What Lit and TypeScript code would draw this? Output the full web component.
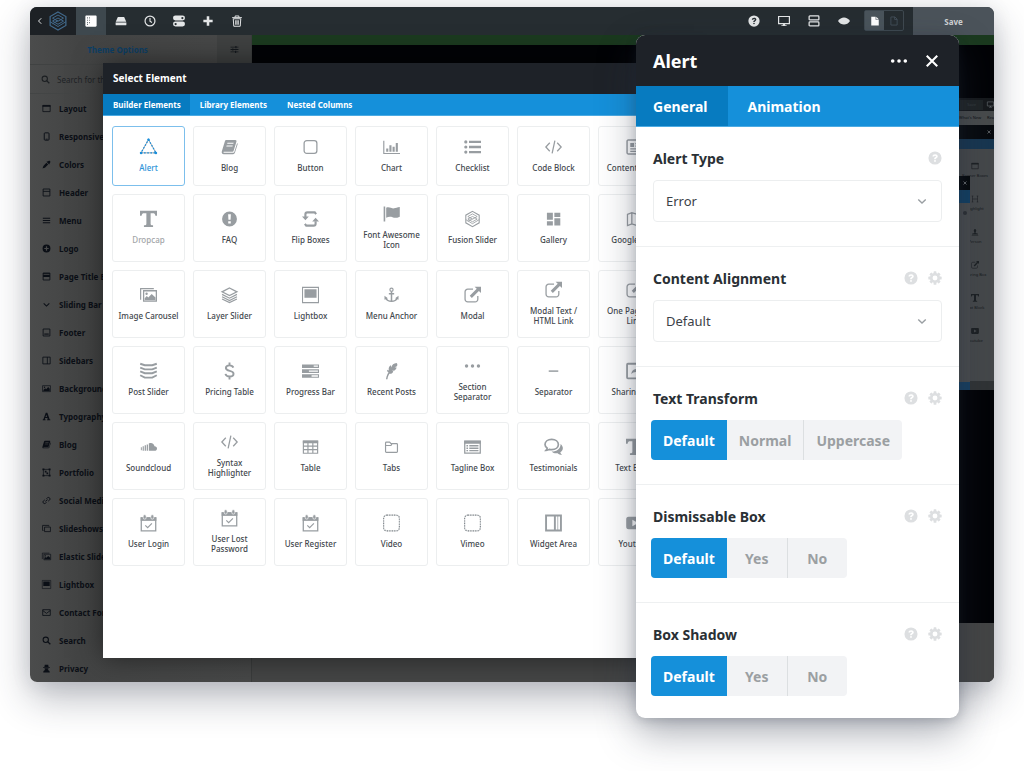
import { LitElement, html, css, svg, nothing } from "lit";
import { customElement, property, state } from "lit/decorators.js";
import { classMap } from "lit/directives/class-map.js";

const cube = svg`
  <path d="M8 .8 14.3 4.4v7.2L8 15.2 1.7 11.6V4.4z" fill="none" stroke="currentColor" stroke-width="1"/>
  <path d="M8 3.2 12.4 5.7 8 8.2 3.6 5.7zM3.6 8 8 5.6l4.4 2.5L8 10.6zM1.7 8.6 8 12.4l6.3-3.8M3.6 10.2 8 7.7" fill="none" stroke="currentColor" stroke-width=".8"/>`;

const external = svg`
  <path d="M8.500 2.500H3.500A2.500 2.500 0 0 0 1 5v7a2.500 2.500 0 0 0 2.500 2.500h7A2.500 2.500 0 0 0 13 12V9" fill="none" stroke="currentColor" stroke-width="1.200"/>
  <path d="M10 .2h6v6l-2-2-6.600 6.600-2-2L12 2.200z"/>`;

const code = svg`<path d="M4.500 4 .8 8l3.700 4M11.500 4l3.700 4-3.700 4M9.300 2 6.700 14" fill="none" stroke="currentColor" stroke-width="1.200"/>`;

const calendar = svg`
  <path d="M1.200 3.200h13.600v12.200H1.200z" fill="none" stroke="currentColor" stroke-width="1.200"/>
  <path d="M.6 2.600h14.800v3.400H.6z"/>
  <rect x="3" y=".3" width="2.800" height="4" rx="1.200" fill="currentColor" stroke="#fff" stroke-width=".6"/>
  <rect x="10.200" y=".3" width="2.800" height="4" rx="1.200" fill="currentColor" stroke="#fff" stroke-width=".6"/>
  <path d="m5 10.200 2.200 2.200 4-4" fill="none" stroke="currentColor" stroke-width="1.100"/>`;

const serifT = svg`<path d="M0 .2h16v4.800h-1.500c-.3-1.800-1-2.300-2.400-2.300H10v10c0 .9.5 1.100 2.300 1.200v1.700H3.700v-1.700c1.800-.1 2.300-.3 2.300-1.200v-10H3.900c-1.400 0-2.100.5-2.400 2.300H0z"/>`;

const dotted = svg`
  <rect x=".6" y=".6" width="14.800" height="14.800" rx="3" fill="none" stroke="#d3d6d8" stroke-width="1"/>
  <rect x=".6" y=".6" width="14.800" height="14.800" rx="3" fill="none" stroke="#7f858a" stroke-width="1" stroke-dasharray="1 1.300"/>`;

const question = svg`
  <path fill-rule="evenodd" d="M8 .5a7.500 7.500 0 1 1 0 15 7.500 7.500 0 0 1 0-15zM5.100 6.300h1.900c.1-.7.500-1 1.100-1 .6 0 1 .3 1 .8 0 .5-.3.700-.9 1.100-.8.500-1.200 1-1.200 2v.2h1.800c0-.6.300-.8.900-1.200.8-.5 1.400-1.100 1.400-2.200 0-1.500-1.200-2.400-2.900-2.400-1.900 0-3 1-3.100 2.700zM8 10.200a1.100 1.100 0 1 0 0 2.200 1.100 1.100 0 0 0 0-2.200z"/>`;

const ICONS: Record<string, unknown> = {
  alert: svg`<path d="M8 1 15 13.500H1z" fill="none" stroke="#9a9ea3" stroke-width=".9"/><path d="M8 1 15 13.500H1z" fill="none" stroke="#1b8fdb" stroke-width="1.200" stroke-dasharray="1.500 1.500"/><circle cx="8" cy="1.200" r="1.200"/><circle cx="1" cy="13.600" r="1.200"/><circle cx="15" cy="13.600" r="1.200"/>`,
  book: svg`<path fill-rule="evenodd" d="M5.200 1.500h8.300c.9 0 1.300.7 1 1.500l-2.600 8.500c-.2.700-.7 1-1.400 1H3c-.6 0-.9.600-.4 1h8.600c.7 0 1.200-.4 1.400-1l2.600-8.300c.5.500.6 1 .4 1.500l-2.500 7.800c-.3.900-.9 1.300-1.700 1.300H2.600C1 14.800.3 13.300.8 12L3.600 2.800c.3-.9.800-1.300 1.600-1.300zM6.100 3.900l-.3 1.100h5.800l.3-1.100zm-.8 2.600L5 7.600h5.800l.3-1.100z"/>`,
  button: svg`<rect x="2" y="2" width="12" height="12" rx="2.500" fill="none" stroke="currentColor" stroke-width="1.200"/>`,
  chart: svg`<path d="M.2 2h1.100v11.600H16v1.100H.2zM3 9.500h2v3H3zM6 6.300h2v6.200H6zM9 7.800h2v4.700H9zM12 4.200h2v8.300h-2z"/>`,
  checklist: svg`<circle cx="1.700" cy="3.200" r="1.500"/><circle cx="1.700" cy="8" r="1.500"/><circle cx="1.700" cy="12.800" r="1.500"/><path d="M4.700 2.100H16v2.200H4.700zM4.700 6.900H16v2.200H4.700zM4.700 11.700H16v2.200H4.700z"/>`,
  code,
  content: svg`<rect x="1" y="1.500" width="14" height="13" rx="1" fill="none" stroke="currentColor" stroke-width="1.400"/><path d="M4 4.200h3.600V8H4zM8.800 4.200h3.400v1.200H8.800zM8.800 6.600h3.400v1.200H8.800zM4 9.200h8.200v1.200H4zM4 11.500h8.200v1.200H4z"/>`,
  dropcap: serifT,
  faq: svg`<path fill-rule="evenodd" d="M8 1a7 7 0 1 1 0 14A7 7 0 0 1 8 1zM6.700 3.600l.3 5.100h2l.3-5.100zM6.800 10.100v2.200h2.400v-2.200z"/>`,
  flip: svg`<path d="M3.200 6V3.600C3.200 2.400 3.800 1.800 5 1.800h7l1.300 1.700M12.800 10v2.400c0 1.200-.6 1.800-1.800 1.800H4l-1.300-1.700" fill="none" stroke="currentColor" stroke-width="2"/><path d="M0 5.600h6.400L3.200 9.200zM9.600 10.400H16l-3.200-3.600z"/>`,
  flag: svg`<path d="M.6 1h1.500v14H.6zM3 2c3-1.200 5 1 7.400.7 1.600-.2 3-.8 5.400-1.200v9c-3.200 1.600-5.200 1.200-6.800.6-2-.7-4-.6-6 .5z"/>`,
  cube,
  gallery: svg`<path d="M1.800 2h5.600v6.800H1.800zM8.800 2h5.600v4H8.800zM8.800 7.400h5.600V14H8.800zM1.800 10.200h5.600V14H1.800z"/>`,
  map: svg`<path d="M1.400 3.600 5.500 2l5 1.600L14.600 2v10.600l-4.100 1.600-5-1.600-4.100 1.600zM5.500 2v10.600M10.500 3.600v10.600" fill="none" stroke="currentColor" stroke-width="1.200"/>`,
  carousel: svg`<path d="M3.400 4h12v9.800h-12z" fill="none" stroke="currentColor" stroke-width="1.200"/><path d="M.6 12.500V2H13" fill="none" stroke="currentColor" stroke-width="1.100"/><path d="M4.400 13v-2l2-2 1.400 1.300L11 7l3.600 3.400V13z"/><circle cx="6.200" cy="6.800" r="1.100"/>`,
  layers: svg`<path d="M8 1.400 15 5 8 8.600 1 5z" fill="none" stroke="currentColor" stroke-width="1.200"/><path d="M1 7.400 8 11l7-3.600M1 9.600l7 3.600 7-3.600M1 11.800l7 3.400 7-3.400" fill="none" stroke="currentColor" stroke-width="1.100"/>`,
  lightbox: svg`<path d="M.5.800h15v14.400H.5z" fill="none" stroke="currentColor" stroke-width="1"/><path d="M2.300 2.600h11.400v8H2.300z"/>`,
  anchor: svg`<path d="M8 4.500v9M5.500 6.800h5M2.600 10.800c1 2.400 2.900 3.100 5.400 3.100s4.400-.7 5.400-3.100" fill="none" stroke="currentColor" stroke-width="1.400"/><circle cx="8" cy="3" r="1.500" fill="none" stroke="currentColor" stroke-width="1.100"/><path d="M1.400 8.800 4.600 11l-3.200 1.500zM14.600 8.800 11.400 11l3.200 1.500z"/>`,
  external,
  sharing: svg`<rect x="1" y="1.200" width="14" height="13.800" rx=".8" fill="none" stroke="currentColor" stroke-width="1.700"/><path d="M5 11c.2-3 1.800-4.600 4.400-4.800V4.400l4 3.200-4 3.200V8.900C7.500 9 6 9.600 5 11z"/>`,
  post: svg`<path d="M.2 1.200 4.500 2.600h7L15.800 1.200M.2 4.800l4.300 1.700h7l4.300-1.700M.2 8.400l4.300 1.700h7l4.300-1.700M.2 12l4.300 2.200h7L15.800 12" fill="none" stroke="currentColor" stroke-width="1.800"/>`,
  dollar: svg`<path d="M11.600 4.800C11.100 3.400 9.900 2.700 8 2.700c-2.100 0-3.400.9-3.400 2.400 0 3.700 7.200 1.800 7.200 5.400 0 1.600-1.500 2.700-3.700 2.700-2.100 0-3.500-.9-3.900-2.500M8 0v2.600M8 13.300V16" fill="none" stroke="currentColor" stroke-width="1.800"/>`,
  progress: svg`<path fill-rule="evenodd" d="M0 1.800h16v3.400H0zM11 2.900v1.200h4V2.900zM0 6.400h16v3.400H0zM6.500 7.500v1.200H15V7.500zM0 11h16v3.400H0zM9 12.100v1.200h6v-1.200z"/>`,
  feather: svg`<path d="M2.800 15.700c.6-3.500 1.400-5 2.400-6.500-.9-.2-1.500-.9-1.200-2.300l1.500.7C4.900 5.200 5.800 3.500 7.500 2.700l.3 1.900C8.400 2.100 10 .6 12.800.4c.9.700.9 2 .3 3.200l-2.200.9 1.900.2c-.4 1.600-1.300 2.500-2.500 3l-1.700-.1 1.100.9c-.7 1.700-2 2.400-3.700 2.100-.9 1.400-1.500 2.900-1.800 5.100z"/>`,
  dots: svg`<circle cx="2.400" cy="8" r="1.600"/><circle cx="8" cy="8" r="1.600"/><circle cx="13.600" cy="8" r="1.600"/>`,
  dash: svg`<path d="M3.500 7.400h9v1.400h-9z"/>`,
  soundcloud: svg`<path d="M8.300 4.700c2.600-1.300 5 .2 5.300 2.600 1.300-.1 2.400.8 2.400 2.100s-1 2.200-2.200 2.200H8.300zM6.300 5.700h1.200v5.900H6.300zM4.400 6.400h1.200v5.200H4.400zM2.500 7.400h1.100v4.200H2.500zM.8 8.300h.9v2.800H.8z"/>`,
  table: svg`<path d="M1.300 2.500h13.400v11.400H1.300zM1.300 7.200h13.400M1.300 10.400h13.400M5.600 4v9.900M10.200 4v9.900" fill="none" stroke="currentColor" stroke-width="1.100"/><path d="M.8 2h14.400v2.500H.8z"/>`,
  folder: svg`<path d="M2.400 12.300V4.200c0-.5.300-.8.800-.8h3l1.400 1.500h5.200c.5 0 .8.300.8.800v6.600c0 .5-.3.800-.8.800H3.200c-.5 0-.8-.3-.8-.8zM2.500 6.600h5l1-1.700" fill="none" stroke="currentColor" stroke-width="1.100"/>`,
  tagline: svg`<path d="M.7 2.500h14.600v11.300H.7z" fill="none" stroke="currentColor" stroke-width="1.200"/><path d="M.2 2h15.600v3H.2zM2.300 6.200h1.500v1.300H2.300zM5 6.200h8.600v1.300H5zM2.300 8.500h1.500v1.300H2.300zM5 8.500h8.600v1.300H5zM2.300 10.800h1.500v1.300H2.300zM5 10.800h8.600v1.300H5z"/>`,
  chat: svg`<path d="M6.300.9c3.700 0 6.300 2.100 6.300 4.800s-2.600 4.800-6.300 4.800c-.8 0-1.500-.1-2.200-.3-.9.600-1.900.9-3.100.9.600-.6 1-1.300 1.100-2C.800 8.200 0 7.100 0 5.700 0 3 2.600.9 6.300.9z" fill="none" stroke="currentColor" stroke-width="1.600"/><path d="M14.700 5.200c2.900 2.600 2.900 5.700-.3 7.800.2 1 .8 1.700 1.700 2.400-1.800 0-3.200-.6-4.200-1.500-2.300.3-4.300-.1-5.700-1.600 4.900.1 8.400-2.500 8.500-7.100z"/>`,
  text: serifT,
  calendar,
  dotted,
  widget: svg`<path d="M1 1h14v14H1zM9.300 1v14" fill="none" stroke="currentColor" stroke-width="1.800"/><path d="M12 1v14" fill="none" stroke="currentColor" stroke-width=".7"/>`,
  youtube: svg`<path fill-rule="evenodd" d="M2.500 2.200h11c1.700 0 2.300 1 2.300 2.600v6.400c0 1.600-.6 2.600-2.300 2.600h-11C.8 13.800.2 12.800.2 11.200V4.800c0-1.600.6-2.600 2.300-2.600zM6 5v6l5.400-3z"/>`,

  layout: svg`<path d="M1.500 2.500h13v11h-13z" fill="none" stroke="currentColor" stroke-width="1.400"/><path d="M1 2h14v3H1z"/>`,
  phone: svg`<rect x="4" y="1.500" width="8.500" height="13" rx="1.500" fill="none" stroke="currentColor" stroke-width="1.700"/><path d="M6.500 11.800h3.500v1.400H6.500z"/>`,
  dropper: svg`<path d="M10.200 2.600c1.200-1.400 2.700-2 4-.9 1.300 1.200.6 2.900-.8 4.100l.6.600-1.400 1.400-4.500-4.500L9.500 2zM7.900 5l3.100 3.100-5.800 5.500-2.600.7-1 .8-.7-.7.800-1 .7-2.600z"/>`,
  header: svg`<path d="M2 1.800h12v12.400H2zM2 6h12" fill="none" stroke="currentColor" stroke-width="1.500"/>`,
  menu: svg`<path d="M1.500 3h13v1.800h-13zM1.500 7.100h13v1.800h-13zM1.500 11.200h13V13h-13z"/>`,
  plusCircle: svg`<path fill-rule="evenodd" d="M8 1a7 7 0 1 1 0 14A7 7 0 0 1 8 1zM6.900 4v2.900H4v2.200h2.900V12h2.200V9.100H12V6.900H9.100V4z"/>`,
  titlebar: svg`<path d="M2 1.800h12v12.400H2z" fill="none" stroke="currentColor" stroke-width="1.500"/><path d="M2 2h12v2H2zM2 5.500h12v3.500H2z"/>`,
  down: svg`<path d="m3 6 5 4.800L13 6" fill="none" stroke="currentColor" stroke-width="1.900"/>`,
  footer: svg`<path d="M2 1.800h12v12.400H2z" fill="none" stroke="currentColor" stroke-width="1.500"/><path d="M4 9.800h8v2H4z"/>`,
  sidebars: svg`<path d="M1.500 2h13v12h-13zM9.500 2v12" fill="none" stroke="currentColor" stroke-width="1.500"/>`,
  image: svg`<path d="M1 3h14v10.500H1z" fill="none" stroke="currentColor" stroke-width="1.200"/><path d="M2.500 12.500v-2l3-3 2 2L11 5.500l2.800 3v4z"/><circle cx="4.500" cy="5.800" r="1.200"/>`,
  typeA: svg`<path fill-rule="evenodd" d="M6.700 1.500h2.800l4 11.600 1.300.2v1.400H9v-1.400l1.300-.2-.7-2.300H5.700L5 13.100l1.400.2v1.400H1.300v-1.400l1.200-.2zM7.600 4.800 6.300 8.900h2.700z"/>`,
  portfolio: svg`<path d="M2.500 2.500h11v11h-11z" fill="none" stroke="currentColor" stroke-width="1.200"/><path d="M.8.800h3.400v3.400H.8zM11.800.8h3.400v3.400h-3.400zM.8 11.800h3.400v3.400H.8zM11.800 11.800h3.400v3.400h-3.400zM5 5h3v3H5zM8 8h3v3H8z"/>`,
  link: svg`<g transform="rotate(8 8 8)"><path d="M7.300 4.900 9.500 2.700a2.700 2.700 0 0 1 3.800 3.800L11.100 8.700M8.700 11.100l-2.200 2.200a2.700 2.700 0 0 1-3.800-3.800L4.900 7.300M6.200 9.800l3.600-3.600" fill="none" stroke="currentColor" stroke-width="1.500"/></g>`,
  slides: svg`<path d="M4.500 5.500h10.500v8H4.500zM2.700 11.500H1v-9h11v1.700" fill="none" stroke="currentColor" stroke-width="1.400"/>`,
  mail: svg`<path d="M1.300 3h13.400v10.200H1.300zM1.300 4.500 8 9.500l6.700-5" fill="none" stroke="currentColor" stroke-width="1.500"/>`,
  search: svg`<circle cx="6.700" cy="6.700" r="4.700" fill="none" stroke="currentColor" stroke-width="1.900"/><path d="m10 10 4.800 4.800" stroke="currentColor" stroke-width="2.300"/>`,
  privacy: svg`<path d="M5 1.500c1-.8 2 0 3 0s2-.8 3 0l.8 4H14v1.300H2V5.500h2.200zM4.500 7.500h7c0 1.600-.8 2.800-1.700 3.300 2.600.5 4 1.600 4 4.200H2.200c0-2.600 1.400-3.700 4-4.200-.9-.5-1.700-1.700-1.700-3.300z"/>`,

  back: svg`<path d="M10.500 2.500 5 8l5.500 5.500" fill="none" stroke="currentColor" stroke-width="2"/>`,
  panel: svg`<path fill-rule="evenodd" d="M2 .5h12c1 0 1.500.5 1.500 1.500v12c0 1-.5 1.500-1.500 1.500H2C1 15.500.5 15 .5 14V2C.5 1 1 .5 2 .5zM2.800 3v1.500h1V3zm0 3.200v1.500h1V6.200zm0 3.200v1.500h1V9.400zm0 2.600v1.400h1V12zM5.600 3v1.500h.9V3zm0 3.200v1.500h.9V6.200zm0 3.200v1.500h.9V9.400z"/>`,
  drive: svg`<path d="M3.800 2.500h8.400L15 9H1zM.8 10h14.400v2.500c0 .8-.4 1.200-1.200 1.200H2c-.8 0-1.200-.4-1.200-1.200z"/>`,
  clock: svg`<circle cx="8" cy="8" r="6.600" fill="none" stroke="currentColor" stroke-width="1.600"/><path d="M8 4v4.400l2.600 1.500" fill="none" stroke="currentColor" stroke-width="1.500"/>`,
  toggles: svg`<path fill-rule="evenodd" d="M3.200.8h9.600a3.200 3.200 0 0 1 0 6.400H3.200a3.200 3.200 0 0 1 0-6.400zM12.500 2.500a1.500 1.500 0 1 0 0 3 1.500 1.500 0 0 0 0-3zM3.200 8.800h9.600a3.200 3.200 0 0 1 0 6.400H3.200a3.200 3.200 0 0 1 0-6.400zM3.500 10.500a1.500 1.500 0 1 0 0 3 1.500 1.500 0 0 0 0-3z"/>`,
  plus: svg`<path d="M6.300 1.800h3.400v4.500h4.500v3.400H9.700v4.500H6.300V9.700H1.800V6.300h4.500z"/>`,
  trash: svg`<path d="M3 5h10l-.7 10H3.700zM1.500 3.500h13M5.500 3V1.300h5V3M6.300 7v6M8 7v6M9.700 7v6" fill="none" stroke="currentColor" stroke-width="1.300"/>`,
  question,
  monitor: svg`<path d="M.8 2h14.400v9.400H.8z" fill="none" stroke="currentColor" stroke-width="1.600"/><path d="M6.500 11.500h3v2h2v1.300h-7v-1.300h2z"/>`,
  rows: svg`<rect x="1.500" y="1.300" width="13" height="5.200" rx="1" fill="none" stroke="currentColor" stroke-width="1.700"/><rect x="1.500" y="9.300" width="13" height="5.200" rx="1" fill="none" stroke="currentColor" stroke-width="1.700"/>`,
  eye: svg`<path d="M0 8c3.800-6.400 12.200-6.400 16 0-3.800 6.400-12.200 6.400-16 0z"/>`,
  file: svg`<path d="M2 1h7v5h5v9H2zM10 1l4 4h-4z"/>`,
  fileLine: svg`<path d="M3 1.500h6.500L13 5v9.500H3zM9 1.500v4h4" fill="none" stroke="currentColor" stroke-width="1.300"/>`,
  sliders: svg`<path d="M1 3h14v1.400H1zM1 7.300h14v1.400H1zM1 11.600h14V13H1zM9.500 1.800h2v3.800h-2zM4 6.100h2v3.800H4zM9 10.400h2v3.800H9z"/>`,
  close: svg`<path d="m2 2 12 12M14 2 2 14" fill="none" stroke="currentColor" stroke-width="2.400"/>`,
  gear: svg`<g transform="translate(8 8)">${[0, 45, 90, 135].map((a) => svg`<rect x="-1.600" y="-7.600" width="3.200" height="15.200" rx=".6" transform="rotate(${a})" mask="url(#hole)"/>`)}</g>
    <defs><mask id="hole" maskUnits="userSpaceOnUse" x="-8" y="-8" width="16" height="16"><rect x="-8" y="-8" width="16" height="16" fill="#fff"/><circle r="4" fill="#000"/></mask></defs>
    <circle cx="8" cy="8" r="4.300" fill="none" stroke="currentColor" stroke-width="3"/>`,
  heading: svg`<path d="M3 2v12M13 2v12M3 8h10M1.500 2h3M11.500 2h3M1.500 14h3M11.500 14h3" fill="none" stroke="currentColor" stroke-width="1.200"/>`,
  person: svg`<path d="M5.500 5a2.500 3 0 1 1 5 0c0 1.500-.8 2.500-1.200 3.500v1.700L14 11.500V13H2v-1.500l4.700-1.300V8.500C6.300 7.500 5.500 6.500 5.500 5zM1.500 14h13v1h-13z"/>`,
};

const icon = (name: string) =>
  html`<svg class="icon" viewBox="0 0 16 16" fill="currentColor" aria-hidden="true">${ICONS[name] ?? nothing}</svg>`;

const base = css`
  * { box-sizing: border-box; }
  button, input, select { font: inherit; color: inherit; border: 0; margin: 0; padding: 0; background: none; }
  button { cursor: pointer; }
  .icon { display: block; flex: none; width: 12px; height: 12px; overflow: visible; }
`;

const OPTIONS: [string, string][] = [
  ["layout", "Layout"], ["phone", "Responsive"], ["dropper", "Colors"], ["header", "Header"],
  ["menu", "Menu"], ["plusCircle", "Logo"], ["titlebar", "Page Title Bar"], ["down", "Sliding Bar"],
  ["footer", "Footer"], ["sidebars", "Sidebars"], ["image", "Background"], ["typeA", "Typography"],
  ["book", "Blog"], ["portfolio", "Portfolio"], ["link", "Social Media"], ["slides", "Slideshows"],
  ["carousel", "Elastic Slider"], ["lightbox", "Lightbox"], ["mail", "Contact Form"],
  ["search", "Search"], ["privacy", "Privacy"],
];

const ELEMENTS: [string, string][] = [
  ["alert", "Alert"], ["book", "Blog"], ["button", "Button"], ["chart", "Chart"], ["checklist", "Checklist"], ["code", "Code Block"], ["content", "Content Boxes"],
  ["dropcap", "Dropcap"], ["faq", "FAQ"], ["flip", "Flip Boxes"], ["flag", "Font Awesome Icon"], ["cube", "Fusion Slider"], ["gallery", "Gallery"], ["map", "Google Map"],
  ["carousel", "Image Carousel"], ["layers", "Layer Slider"], ["lightbox", "Lightbox"], ["anchor", "Menu Anchor"], ["external", "Modal"], ["external", "Modal Text / HTML Link"], ["external", "One Page Text Link"],
  ["post", "Post Slider"], ["dollar", "Pricing Table"], ["progress", "Progress Bar"], ["feather", "Recent Posts"], ["dots", "Section Separator"], ["dash", "Separator"], ["sharing", "Sharing Box"],
  ["soundcloud", "Soundcloud"], ["code", "Syntax Highlighter"], ["table", "Table"], ["folder", "Tabs"], ["tagline", "Tagline Box"], ["chat", "Testimonials"], ["text", "Text Block"],
  ["calendar", "User Login"], ["calendar", "User Lost Password"], ["calendar", "User Register"], ["dotted", "Video"], ["dotted", "Vimeo"], ["widget", "Widget Area"], ["youtube", "Youtube"],
];

@customElement("builder-toolbar")
class BuilderToolbar extends LitElement {
  static styles = [base, css`
    :host { display: flex; height: 28px; background: #262d31; color: #e4e6e7; font-size: 8px; }
    .home { display: flex; align-items: center; gap: 4px; width: 46px; padding-left: 6px; background: #1d2125; }
    .home .icon { width: 8px; height: 8px; }
    .home .icon + .icon { width: 20px; height: 20px; color: #41688a; }
    .tool { display: grid; place-items: center; width: 29px; }
    .on { width: 30px; background: #3e484e; color: #fff; }
    .right { margin-left: auto; }
    .right ~ .tool { width: 30px; }
    .switch { display: flex; margin: 3px 9px 4px 5px; border: 1px solid #3f4950; border-radius: 2px; }
    .switch button { display: grid; place-items: center; width: 19px; }
    .switch .icon { width: 10px; height: 10px; }
    .switch button:first-child { background: #4a545b; color: #fff; }
    .switch button:last-child { color: #46535e; }
    .save { width: 81px; background: #4b535a; font-weight: 700; color: #cfd2d4; }
  `];
  render() {
    return html`
      <button class="home" aria-label="Back">${icon("back")}${icon("cube")}</button>
      ${["panel", "drive", "clock", "toggles", "plus", "trash"].map((n, i) =>
        html`<button class="tool ${classMap({ on: i === 0 })}" aria-label=${n}>${icon(n)}</button>`)}
      <span class="right"></span>
      ${["question", "monitor", "rows", "eye"].map((n) =>
        html`<button class="tool" aria-label=${n}>${icon(n)}</button>`)}
      <div class="switch">
        <button aria-label="Published">${icon("file")}</button>
        <button aria-label="Draft">${icon("fileLine")}</button>
      </div>
      <button class="save">Save</button>`;
  }
}

@customElement("theme-options")
class ThemeOptions extends LitElement {
  static styles = [base, css`
    :host { display: block; color: #0b0f16; font-size: 8px; background: linear-gradient(90deg, #4b4c4c, #434444 22%, #474848); }
    .head { display: flex; height: 30px; border-bottom: 1px solid #404242; }
    h2 { flex: 1; margin: 0; padding-right: 12px; font-size: 8px; line-height: 30px; text-align: center; color: #0d3f66; }
    .filter { display: grid; place-items: center; width: 34px; background: #3f4141; color: #14181d; }
    .filter .icon { width: 9px; height: 9px; }
    .search { display: flex; align-items: center; gap: 7px; height: 29px; padding-left: 11px; border-bottom: 1px solid #434545; color: #1c1f22; }
    .search .icon { width: 9px; height: 9px; }
    input { flex: 1; min-width: 0; outline: 0; }
    input::placeholder { color: #202326; opacity: 1; }
    ul { list-style: none; margin: 0; padding: 0; }
    a { display: flex; align-items: center; gap: 8px; height: 28px; padding-left: 12px; color: inherit; text-decoration: none; font-weight: 700; }
    a .icon { width: 9px; height: 9px; }
  `];
  render() {
    return html`
      <div class="head"><h2>Theme Options</h2><button class="filter" aria-label="Filter">${icon("sliders")}</button></div>
      <label class="search">${icon("search")}<input type="text" placeholder="Search for theme option(s)" aria-label="Search for theme options"></label>
      <ul>${OPTIONS.map(([i, t]) => html`<li><a href="#">${icon(i)}${t}</a></li>`)}</ul>`;
  }
}

@customElement("page-preview")
class PagePreview extends LitElement {
  static styles = [base, css`
    :host { display: block; position: relative; width: 35px; overflow: hidden; font-size: 4px; line-height: 6px; color: #0d1014; background: #45484a; }
    .bar { display: flex; align-items: center; justify-content: flex-end; gap: 4px; height: 13px; background: #16191c; color: #5b6165; white-space: nowrap; }
    .bar span { padding: 2px 7px; background: #1f2426; color: #363d40; }
    .bar .icon { width: 7px; height: 7px; }
    .nav { display: flex; justify-content: space-between; height: 14px; align-items: center; background: #484b4c; white-space: nowrap; }
    .title { display: flex; justify-content: flex-end; padding-right: 3px; align-items: center; height: 14px; background: #070a0e; color: #8b8f92; }
    .title .icon, .head .icon { width: 4px; height: 4px; }
    .tabs { height: 10px; background: #173650; }
    .cards { display: grid; grid-auto-rows: 33px; justify-items: center; padding: 13px 3px 21px 0; border-bottom: 9px solid #303335; }
    .card { display: grid; justify-items: center; align-content: start; gap: 3px; white-space: nowrap; color: #15181b; }
    .card .icon { width: 8px; height: 8px; color: #1c2023; }
    .window { position: absolute; left: 0; top: 78px; width: 11px; height: 221px; display: flex; flex-direction: column; background: #494c4e; }
    .head { display: grid; place-items: center; height: 14px; background: #05080b; color: #a0a4a7; }
    .strip { height: 13px; background: #123f62; }
    .help { width: 4px; height: 4px; margin: 8px auto 0; border-radius: 50%; background: #2c3033; }
    .foot { height: 15px; margin-top: auto; background: #173f60; }
  `];
  render() {
    const cards = [["layout", "Banner Boxes"], ["heading", "Highlight"], ["person", "Person"], ["external", "Sharing Box"], ["text", "Text Block"], ["youtube", "Youtube"]];
    return html`
      <div class="bar"><span>Save</span>${icon("monitor")}</div>
      <div class="nav"><span>What's New</span><span>Rea</span></div>
      <div class="title">${icon("close")}</div>
      <div class="tabs"></div>
      <div class="cards">${cards.map(([i, t]) => html`<div class="card">${icon(i)}${t}</div>`)}</div>
      <div class="window"><div class="head">${icon("close")}</div><div class="strip"></div><div class="help"></div><div class="foot"></div></div>`;
  }
}

@customElement("element-picker")
class ElementPicker extends LitElement {
  @state() private selected = "Alert";
  static styles = [base, css`
    :host { display: flex; flex-direction: column; overflow: hidden; background: #fff; font-size: 8px; }
    h2 { margin: 0; padding: 0 10px; font-size: 10px; line-height: 31px; background: #1e2228; color: #fff; }
    .tabs { display: flex; height: 22px; background: #1590da; border-bottom: 1px solid #4cabe3; }
    .tabs button { padding: 0 10px; font-weight: 700; color: #fff; }
    .tabs .active { padding-right: 9px; background: #077bc0; }
    .grid { display: grid; grid-template-columns: repeat(7, 73px); gap: 8px; padding: 10px 9px; }
    .card { display: flex; flex-direction: column; align-items: center; justify-content: center; gap: 7px; min-height: 60px; padding: 10px 4px 11px; border: 1px solid #eceeef; border-radius: 3px; color: #42474d; font-weight: 500; line-height: 10px; }
    .card .icon { width: 17px; height: 18px; color: #989da1; }
    .muted { color: #a2a5a8; }
    .selected { border-color: #7cbfec; color: #2d93d8; }
    .selected .icon { color: #1b8fdb; }
  `];
  render() {
    return html`
      <h2>Select Element</h2>
      <div class="tabs" role="tablist">
        ${["Builder Elements", "Library Elements", "Nested Columns"].map((t, i) =>
          html`<button role="tab" class=${classMap({ active: i === 0 })}>${t}</button>`)}
      </div>
      <div class="grid">
        ${ELEMENTS.map(([i, t]) => html`
          <button class="card ${classMap({ selected: t === this.selected, muted: t === "Dropcap" })}"
            @click=${() => (this.selected = t)}>${icon(i)}<span>${t}</span></button>`)}
      </div>`;
  }
}

@customElement("setting-row")
class SettingRow extends LitElement {
  @property() label = "";
  @property({ type: Boolean }) dropdown = false;
  @property({ type: Boolean }) gear = false;
  @property({ attribute: false }) options: string[] = [];
  @state() private value = 0;
  static styles = [base, css`
    :host { display: block; padding: 21px 17px 24px; border-bottom: 1px solid #eef0f1; }
    :host(:last-of-type) { border-bottom: 0; padding-bottom: 22px; }
    .top { display: flex; align-items: center; gap: 10px; height: 20px; margin-bottom: 12px; color: #dddfe1; }
    label, .name { flex: 1; font-size: 14px; font-weight: 700; color: #2a3035; }
    .top .icon { width: 14px; height: 14px; }
    .box { display: grid; grid-template-columns: 1fr auto; align-items: center; height: 42px; border: 1px solid #eceeef; border-radius: 4px; }
    select { grid-area: 1 / 1 / 2 / 3; appearance: none; width: 100%; height: 40px; padding: 0 12px; font-size: 13px; color: #3b4147; outline: 0; }
    .box .icon { grid-area: 1 / 2; margin-right: 13px; color: #9a9fa3; pointer-events: none; }
    .group { display: inline-flex; height: 40px; margin-left: -2px; border-radius: 4px; overflow: hidden; background: #f2f3f5; vertical-align: top; }
    .group button { min-width: 60px; padding: 0 12px; font-size: 14px; font-weight: 700; color: #9b9fa2; }
    .group button + button + button { border-left: 1px solid #dcdfe1; }
    .group .active { background: #1590da; color: #fff; }
  `];
  render() {
    return html`
      <div class="top">
        ${this.dropdown ? html`<label for="field">${this.label}</label>` : html`<span class="name" id="name">${this.label}</span>`}
        <button aria-label="Help">${icon("question")}</button>
        ${this.gear ? html`<button aria-label="Settings">${icon("gear")}</button>` : nothing}
      </div>
      ${this.dropdown
        ? html`<div class="box"><select id="field">${this.options.map((o) => html`<option>${o}</option>`)}</select>${icon("down")}</div>`
        : html`<div class="group" role="group" aria-labelledby="name">
            ${this.options.map((o, i) => html`<button class=${classMap({ active: i === this.value })} @click=${() => (this.value = i)}>${o}</button>`)}
          </div>`}`;
  }
}

@customElement("settings-panel")
class SettingsPanel extends LitElement {
  static styles = [base, css`
    :host { display: block; overflow: hidden; border-radius: 9px; background: #fff; box-shadow: 0 16px 38px rgba(40, 48, 66, .36), 0 2px 12px rgba(30, 38, 56, .2); }
    header { display: flex; align-items: center; gap: 17px; height: 51px; padding: 0 20px 0 17px; background: #1e2228; color: #fff; }
    h2 { flex: 1; margin: 0; font-size: 18px; }
    header .icon { width: 14px; height: 14px; }
    header button:first-of-type .icon { width: 18px; height: 18px; }
    .tabs { display: flex; height: 41px; background: #1590da; border-bottom: 1px solid #4cabe3; }
    .tabs button { padding: 0 20px; font-size: 14px; font-weight: 700; color: #fff; }
    .tabs .active { padding-left: 17px; background: #077bc0; }
  `];
  render() {
    return html`
      <header><h2>Alert</h2><button aria-label="More">${icon("dots")}</button><button aria-label="Close">${icon("close")}</button></header>
      <div class="tabs" role="tablist"><button role="tab" class="active">General</button><button role="tab">Animation</button></div>
      <setting-row label="Alert Type" dropdown .options=${["Error", "General", "Notice", "Success"]}></setting-row>
      <setting-row label="Content Alignment" dropdown gear .options=${["Default", "Left", "Center", "Right"]}></setting-row>
      <setting-row label="Text Transform" gear .options=${["Default", "Normal", "Uppercase"]}></setting-row>
      <setting-row label="Dismissable Box" gear .options=${["Default", "Yes", "No"]}></setting-row>
      <setting-row label="Box Shadow" gear .options=${["Default", "Yes", "No"]}></setting-row>`;
  }
}

@customElement("app-root")
class AppRoot extends LitElement {
  static styles = [base, css`
    :host { display: block; position: relative; min-height: 100vh; padding: 7px 30px 0; overflow: hidden; background: #fff; font-family: "Noto Sans", "Open Sans", sans-serif; }
    .shadow { border-radius: 7px; box-shadow: 0 16px 38px rgba(40, 48, 66, .32), 0 2px 20px rgba(30, 38, 56, .1); }
    .window { position: relative; border-radius: 7px; overflow: hidden; }
    .body { display: grid; grid-template-columns: 221px 1fr; }
    .canvas { display: flex; flex-direction: column; background: #020306; border-left: 1px solid #3a3c3c; }
    .strip { height: 10px; background: #1b3a1f; }
    .preview { flex: 1; display: flex; justify-content: flex-end; align-items: flex-start; padding-top: 53px; }
    .bottom { height: 59px; background: #444545; }
    .picker { position: absolute; left: 73px; right: 300px; top: 56px; bottom: 24px; box-shadow: 0 0 26px rgba(0, 0, 0, .5); }
    .settings { position: absolute; right: 65px; top: 35px; width: 323px; }
  `];
  render() {
    return html`
      <div class="shadow">
        <div class="window">
          <builder-toolbar></builder-toolbar>
          <div class="body">
            <theme-options></theme-options>
            <div class="canvas">
              <div class="strip"></div>
              <div class="preview"><page-preview></page-preview></div>
              <div class="bottom"></div>
            </div>
          </div>
          <element-picker class="picker"></element-picker>
        </div>
      </div>
      <settings-panel class="settings"></settings-panel>`;
  }
}
